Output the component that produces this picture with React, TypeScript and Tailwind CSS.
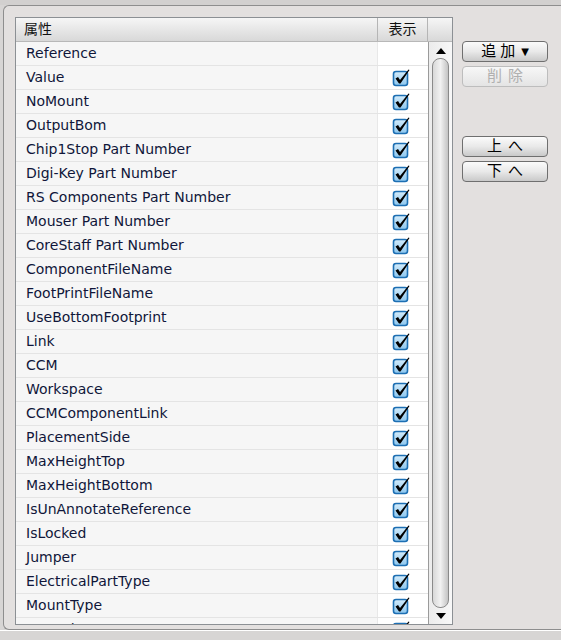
import React from "react";

const rows = [
  "Reference",
  "Value",
  "NoMount",
  "OutputBom",
  "Chip1Stop Part Number",
  "Digi-Key Part Number",
  "RS Components Part Number",
  "Mouser Part Number",
  "CoreStaff Part Number",
  "ComponentFileName",
  "FootPrintFileName",
  "UseBottomFootprint",
  "Link",
  "CCM",
  "Workspace",
  "CCMComponentLink",
  "PlacementSide",
  "MaxHeightTop",
  "MaxHeightBottom",
  "IsUnAnnotateReference",
  "IsLocked",
  "Jumper",
  "ElectricalPartType",
  "MountType",
  "Footprint",
];

function Check() {
  return (
    <svg width="19" height="19" viewBox="0 0 19 19">
      <defs>
        <linearGradient id="cbg" x1="0" y1="0" x2="0" y2="1">
          <stop offset="0" stopColor="#d4ecfb" />
          <stop offset="1" stopColor="#8cc6ee" />
        </linearGradient>
      </defs>
      <rect x="1.5" y="3.5" width="14" height="14" rx="2.5" fill="url(#cbg)" stroke="#1d6fb3" strokeWidth="1.6" />
      <path d="M3.5 10.5 L6 9 L8 12 L16.5 1.5 L17.5 2 L8.5 15.5 L7 15.5 Z" fill="#000" />
    </svg>
  );
}

function Btn({ children, disabled }: { children: React.ReactNode; disabled?: boolean }) {
  return (
    <div
      className={
        "w-[86px] h-[21px] rounded-[4px] border flex items-center justify-center text-[15px] leading-none " +
        (disabled
          ? "border-[#bdbdbd] bg-gradient-to-b from-[#f7f7f7] to-[#e4e4e4] text-[#b0b0b0]"
          : "border-[#6f6f6f] bg-gradient-to-b from-[#fbfbfb] via-[#e9e9e9] to-[#c9c9c9] text-[#000]")
      }
    >
      {children}
    </div>
  );
}

export default function App() {
  return (
    <div
      className="w-[561px] h-[640px] bg-[#d7d5d4] overflow-hidden flex flex-col"
      style={{ fontFamily: '"DejaVu Sans", "Noto Sans CJK JP", sans-serif' }}
    >
      <div className="h-[5px] shrink-0 bg-[#d2d0cf]" />
      <div className="h-[625px] shrink-0 ml-[3px] border-t border-l border-[#8e8e8e] rounded-tl-[6px] rounded-bl-[6px] border-b bg-[#e3e0df] flex pt-[11px] pl-[11px]">
        <div className="w-[438px] h-[608px] border border-[#8c9094] bg-white flex flex-col overflow-hidden">
          <div className="h-[24px] shrink-0 flex bg-gradient-to-b from-[#f6f6f6] to-[#d8d8d8] border-b border-[#b8b8b8] text-[14px] text-[#111]">
            <div className="w-[362px] border-r border-[#b5b5b5] flex items-center pl-[8px]">属性</div>
            <div className="w-[50px] border-r border-[#b5b5b5] flex items-center justify-center">表示</div>
            <div className="flex-1" />
          </div>
          <div className="flex flex-1 overflow-hidden">
            <div className="w-[412px] flex flex-col overflow-hidden">
              {rows.map((r, i) => (
                <div key={r} className="h-[24px] shrink-0 flex border-b border-[#e4e4e4]">
                  <div className="w-[362px] bg-[#f6f6f6] border-r border-[#e8e8e8] flex items-center pl-[10px] text-[14px] text-[#10163a]">
                    {r}
                  </div>
                  <div className="w-[50px] bg-white flex items-center justify-start pl-[14px]">
                    {i > 0 && <Check />}
                  </div>
                </div>
              ))}
            </div>
            <div className="flex-1 border-l border-[#9a9a9a] bg-gradient-to-r from-[#ececec] to-[#f8f8f8] flex flex-col items-center">
              <div className="h-[16px] flex items-center justify-center pt-[2px]">
                <div className="w-0 h-0 border-l-[5px] border-r-[5px] border-b-[6px] border-l-transparent border-r-transparent border-b-black" />
              </div>
              <div className="w-[17px] flex-1 rounded-[8px] border border-[#8a8a8a] bg-gradient-to-r from-[#d8d8d8] via-[#f2f2f2] to-[#c4c4c4]" />
              <div className="h-[16px] flex items-center justify-center">
                <div className="w-0 h-0 border-l-[5px] border-r-[5px] border-t-[6px] border-l-transparent border-r-transparent border-t-black" />
              </div>
            </div>
          </div>
        </div>
        <div className="ml-[9px] pt-[24px] flex flex-col">
          <Btn>
            <span className="tracking-[4px]">追加</span>
            <span className="text-[10px] ml-[2px]">▼</span>
          </Btn>
          <div className="h-[4px]" />
          <Btn disabled>
            <span className="tracking-[6px] pl-[6px]">削除</span>
          </Btn>
          <div className="h-[49px]" />
          <Btn>
            <span className="tracking-[6px] pl-[6px]">上へ</span>
          </Btn>
          <div className="h-[4px]" />
          <Btn>
            <span className="tracking-[6px] pl-[6px]">下へ</span>
          </Btn>
        </div>
      </div>
      <div className="h-px bg-white" />
    </div>
  );
}
